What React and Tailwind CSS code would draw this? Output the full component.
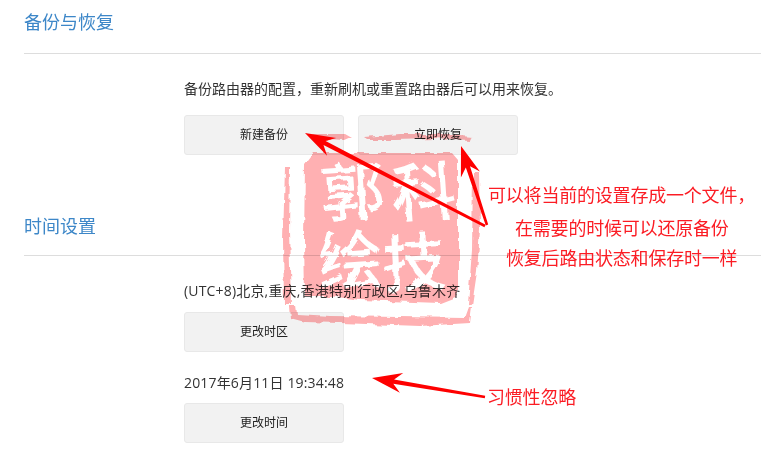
function Arrow({ from, to, head = 30, wing = 10, notch = 22, tail = 1.3, neck = 2.2 }) {
  const [x1, y1] = from;
  const [x2, y2] = to;
  const len = Math.hypot(x2 - x1, y2 - y1);
  const ux = (x2 - x1) / len;
  const uy = (y2 - y1) / len;
  const nx = -uy;
  const ny = ux;
  const at = (d, o) => `${(x2 - ux * d + nx * o).toFixed(1)},${(y2 - uy * d + ny * o).toFixed(1)}`;
  const pts = [
    `${(x1 + nx * tail).toFixed(1)},${(y1 + ny * tail).toFixed(1)}`,
    at(notch, neck),
    at(head, wing),
    at(0, 0),
    at(head, -wing),
    at(notch, -neck),
    `${(x1 - nx * tail).toFixed(1)},${(y1 - ny * tail).toFixed(1)}`,
  ].join(" ");
  return <polygon points={pts} fill="#fe0000" />;
}

function Btn({ children }) {
  return (
    <button className="w-[160px] h-[40px] flex items-center justify-center rounded-[3px] border border-[#e8e8e8] bg-[#f2f2f2] text-[12px] text-[#222]">
      {children}
    </button>
  );
}

function Title({ children, className }) {
  return (
    <div className={`pb-[15px] border-b border-[#dddddd] text-[18px] leading-[28px] text-[#3d87c8] ${className}`}>
      {children}
    </div>
  );
}

export default function App() {
  const font = { fontFamily: '"Open Sans","Noto Sans CJK SC",sans-serif' };
  return (
    <div className="relative w-[761px] h-[457px] overflow-hidden bg-white" style={font}>
      <div className="pl-6">
        <Title className="pt-[8px] !pb-[17px]">备份与恢复</Title>
        <div className="pl-[160px]">
          <p className="mt-[25px] text-[14px] leading-[20px] text-[#333]">备份路由器的配置，重新刷机或重置路由器后可以用来恢复。</p>
          <div className="mt-[16px] flex gap-[14px]">
            <Btn>新建备份</Btn>
            <Btn>立即恢复</Btn>
          </div>
        </div>
        <Title className="mt-[57px]">时间设置</Title>
        <div className="pl-[160px]">
          <p className="mt-[25px] text-[14px] leading-[20px] text-[#333] tracking-[0.18px]">(UTC+8)北京,重庆,香港特别行政区,乌鲁木齐</p>
          <div className="mt-[11px]"><Btn>更改时区</Btn></div>
          <p className="mt-[21px] text-[14px] leading-[20px] text-[#333] tracking-[0.16px]">2017年6月11日 19:34:48</p>
          <div className="mt-[10px]"><Btn>更改时间</Btn></div>
        </div>
      </div>

      {/* watermark stamp */}
      <svg className="absolute left-0 top-0 mix-blend-multiply pointer-events-none" width="761" height="457" viewBox="0 0 761 457">
        <defs>
          <filter id="rough" x="-10%" y="-10%" width="120%" height="120%">
            <feTurbulence type="fractalNoise" baseFrequency="0.09" numOctaves="2" seed="4" />
            <feDisplacementMap in="SourceGraphic" scale="6" />
          </filter>
        </defs>
        <g filter="url(#rough)">
          <path fill="#ffb0b2" d="M314 153 L452 153 L458 160 L458 296 L440 303 L360 300 L330 296 L305 296 L304 240 L305 165 Z" />
          <path fill="#ffb0b2" d="M285 167 L290 167 L289 230 L291 304 L284 304 L283 240 Z" />
          <path fill="#ffb0b2" d="M289 306 L296 306 L297 314 L330 316 L400 317 L465 318 L469 307 L472 307 L470 323 L420 326 L340 323 L305 322 L290 318 Z" />
          <path fill="#ffb0b2" d="M473 172 L479 172 L480 230 L477 272 L472 305 L468 304 L472 250 Z" />
          <path fill="#ffb0b2" d="M312 134 L345 134 L352 138 L345 141 L315 139 Z" />
          <path fill="#ffb0b2" d="M364 137 L400 134 L440 134 L472 137 L470 141 L435 139 L395 140 L368 140 Z" />
          <g fill="#ffffff" fontFamily='"Noto Sans CJK SC",sans-serif' fontWeight="500" textAnchor="middle">
            <text x="353" y="215" fontSize="64" transform="rotate(-4 353 193)">郭</text>
            <text x="424" y="215" fontSize="64" transform="rotate(-4 424 193)">科</text>
            <text x="350" y="284" fontSize="64" transform="rotate(-4 350 260)">绘</text>
            <text x="414" y="286" fontSize="64" transform="rotate(-3 414 262)">技</text>
          </g>
        </g>
      </svg>

      {/* arrows */}
      <svg className="absolute left-0 top-0 pointer-events-none" width="761" height="457" viewBox="0 0 761 457">
        <Arrow from={[485, 226]} to={[305, 133]} />
        <Arrow from={[487, 225]} to={[461, 146]} />
        <Arrow from={[485, 397]} to={[372, 378]} />
      </svg>

      {/* annotations */}
      <div className="absolute left-[488px] top-[182px] text-[18px] leading-[26px] text-[#fb1c24] tracking-[-0.2px] whitespace-nowrap">可以将当前的设置存成一个文件，</div>
      <div className="absolute left-[515px] top-[215px] text-[18px] leading-[26px] text-[#fb1c24] tracking-[-0.2px] whitespace-nowrap">在需要的时候可以还原备份</div>
      <div className="absolute left-[506px] top-[245px] text-[18px] leading-[26px] text-[#fb1c24] tracking-[-0.2px] whitespace-nowrap">恢复后路由状态和保存时一样</div>
      <div className="absolute left-[487px] top-[384px] text-[18px] leading-[26px] text-[#fb1c24] tracking-[-0.2px] whitespace-nowrap">习惯性忽略</div>
    </div>
  );
}
